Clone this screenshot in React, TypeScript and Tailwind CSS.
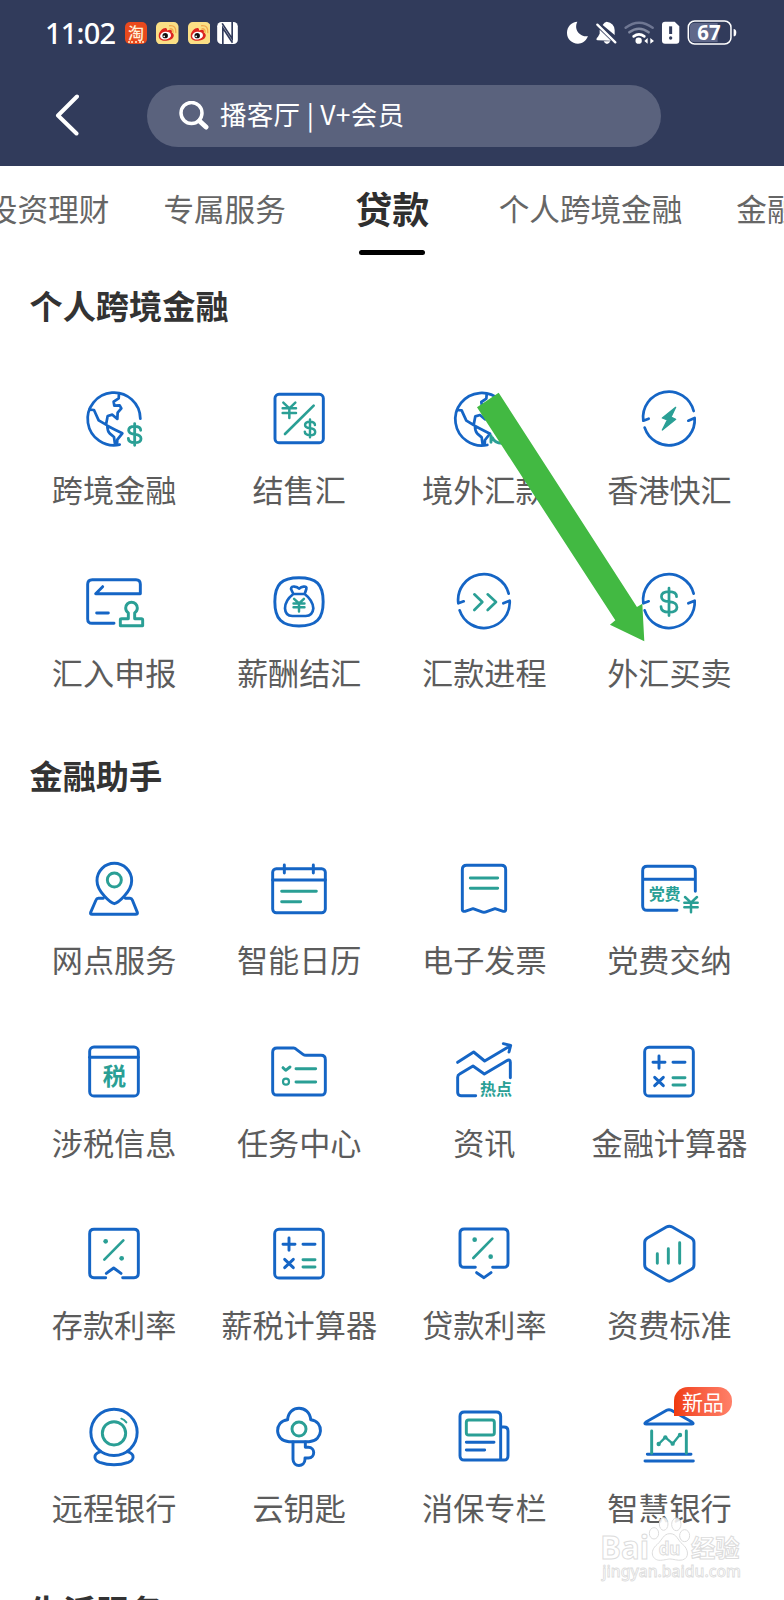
import React from "react";

const B = "#1565c5";
const G = "#2a9f95";

function Icon({ box, children }: { box: string; children: React.ReactNode }) {
  return (
    <svg
      viewBox={box}
      className="h-16 w-16 shrink-0 overflow-visible"
      fill="none"
      stroke={B}
      strokeWidth={8.8}
      strokeLinecap="round"
      strokeLinejoin="round"
    >
      {children}
    </svg>
  );
}

function Dollar({ x, y, s = 1, w = 8.5 }: { x: number; y: number; s?: number; w?: number }) {
  return (
    <path
      transform={`translate(${x} ${y}) scale(${s})`}
      stroke={G}
      strokeWidth={w}
      d="M18 -12 C18 -22 11 -24 0 -24 C-11 -24 -18 -21 -18 -12 C-18 -4 -11 -1 0 0 C11 1 19 4 19 13 C19 22 11 25 0 25 C-11 25 -19 21 -19 12 M0 -32 V33"
    />
  );
}

function Yen({ x, y, s = 1, w = 7.5 }: { x: number; y: number; s?: number; w?: number }) {
  return (
    <path
      transform={`translate(${x} ${y}) scale(${s})`}
      stroke={G}
      strokeWidth={w}
      d="M-18 -20 L0 -3 L18 -20 M0 -3 V26 M-20 -3 H20 M-20 11 H20"
    />
  );
}

function Cycle({ x, y }: { x: number; y: number }) {
  return (
    <path
      transform={`translate(${x} ${y})`}
      strokeWidth={8.2}
      d="M-61 -1 L-77 5 A77 77 0 0 1 74 -24 M58 5 L77 -3 A77 77 0 0 1 -73 26"
    />
  );
}

function Globe({ x, y }: { x: number; y: number }) {
  return (
    <g transform={`translate(${x} ${y})`} strokeWidth={8.2}>
      <path d="M79 -1 A79 79 0 1 0 17 77" />
      <path d="M15 -75 L14 -62 L-1 -52 L1 -40 L17 -41 L22 -32 L11 -19 L10 0 L-5 -13 L-19 -9 L-24 17 L-46 4 L-56 -18 L-60 -27 L-74 -28" />
      <path d="M9 76 L10 62 L25 43 L3 32 L-20 20 Q-20 35 -13 43 L0 54 L3 76" />
    </g>
  );
}

function Calculator({ x, y }: { x: number; y: number }) {
  return (
    <g transform={`translate(${x} ${y})`}>
      <rect x="-73" y="-73" width="146" height="146" rx="13" />
      <path d="M-30 -47 V-10 M-48 -28.500 H-12 M12 -28.500 H48 M-43 17 L-17 42 M-17 17 L-43 42" />
      <path stroke={G} d="M12 18 H48 M12 40 H48" />
    </g>
  );
}

function Percent({ x, y }: { x: number; y: number }) {
  return (
    <g transform={`translate(${x} ${y})`} stroke={G}>
      <path strokeWidth={8} d="M29 -29 L-28 29" />
      <circle cx="-24" cy="-26" r="7" fill={G} stroke="none" />
      <circle cx="24" cy="25" r="7" fill={G} stroke="none" />
    </g>
  );
}

function Glyph({ x, y, size, w, children }: { x: number; y: number; size: number; w: number; children: string }) {
  return (
    <text
      x={x}
      y={y}
      fontSize={size}
      textLength={w}
      fill={G}
      stroke="none"
      className="font-['Noto_Sans_CJK_SC',sans-serif] font-bold"
    >
      {children}
    </text>
  );
}

const crossBorder = [
  {
    label: "跨境金融",
    icon: (
      <Icon box="246 51 192 192">
        <Globe x={342} y={147} />
        <Dollar x={404} y={193} />
      </Icon>
    ),
  },
  {
    label: "结售汇",
    icon: (
      <Icon box="802 51 192 192">
        <rect x="826" y="73" width="145" height="145" rx="12" />
        <Yen x={869} y={118} />
        <path stroke={G} strokeWidth={8} d="M942 107 L856 192" />
        <Dollar x={931} y={175} s={0.82} w={9} />
      </Icon>
    ),
  },
  {
    label: "境外汇款",
    icon: (
      <Icon box="180 51 192 192">
        <Globe x={269} y={148} />
        <path stroke={G} d="M297 197 V217 M301 203 Q308 219 330 220" />
      </Icon>
    ),
  },
  {
    label: "香港快汇",
    icon: (
      <Icon box="736 51 192 192">
        <Cycle x={832} y={147} />
        <path stroke={G} strokeWidth={4} fill={G} d="M852 112 L812 144 L827 150 L812 180 L852 148 L838 141 Z" />
      </Icon>
    ),
  },
  {
    label: "汇入申报",
    icon: (
      <Icon box="246 599 192 192">
        <path d="M342 759 H276 Q263 759 263 746 V642 Q263 628 277 628 H408 Q421 628 421 642 V670 H287 L308 649 M290 728 H325" />
        <path
          stroke={G}
          d="M361 766 V748 Q361 745 365 745 H385 V728 Q377 722 377 713 A17.500 17.500 0 0 1 412 713 Q412 722 404 728 V745 H424 Q428 745 428 749 V766 Z"
        />
      </Icon>
    ),
  },
  {
    label: "薪酬结汇",
    icon: (
      <Icon box="802 599 192 192">
        <path d="M898 622 C950 622 970.500 642 970.500 694 C970.500 746 950 767 898 767 C846 767 825.500 746 825.500 694 C825.500 642 846 622 898 622 Z" />
        <path
          strokeWidth={8}
          d="M881 671 C864 684 856 700 856 714 Q857 736 878 737 H918 Q939 736 941 714 C940 700 932 684 915 671 Z M881 671 L874 656 Q875 647 885 649 Q893 650 898 655 Q904 650 912 649 Q922 648 920 656 L915 671"
        />
        <Yen x={898} y={702} s={0.82} w={9} />
      </Icon>
    ),
  },
  {
    label: "汇款进程",
    icon: (
      <Icon box="180 599 192 192">
        <Cycle x={276} y={694} />
        <path stroke={G} strokeWidth={8} d="M247 672 L271 695 L247 719 M287 672 L312 695 L287 719" />
      </Icon>
    ),
  },
  {
    label: "外汇买卖",
    icon: (
      <Icon box="736 599 192 192">
        <Cycle x={832} y={694} />
        <Dollar x={832} y={694} s={1.26} w={6.5} />
      </Icon>
    ),
  },
];

const assistant = [
  {
    label: "网点服务",
    icon: (
      <Icon box="246 351 192 192">
        <path d="M343 491 C334 489 291 456 291 422 A51.500 51.500 0 0 1 395 422 C395 456 352 489 343 491 Z" />
        <path d="M310 475 H295 Q290 475 288 480 L272 517 Q270 523 276 523 H407 Q414 523 412 517 L397 480 Q395 475 390 475 H376" />
        <circle cx="343" cy="420" r="21" stroke={G} />
      </Icon>
    ),
  },
  {
    label: "智能日历",
    icon: (
      <Icon box="802 351 192 192">
        <rect x="819" y="386" width="158" height="132" rx="11" />
        <path d="M819 420 H977 M854 375 V399 M941 375 V399" />
        <path stroke={G} d="M846 454 H950 M846 485 H903" />
      </Icon>
    ),
  },
  {
    label: "电子发票",
    icon: (
      <Icon box="180 51 192 192">
        <path d="M211 209 V89 Q211 76 224 76 H328 Q341 76 341 89 V209 Q341 215 334 214 L309 206 L284 215 Q276 219 268 215 L243 206 L219 214 Q211 215 211 209 Z" />
        <path stroke={G} d="M235 114 H317 M235 145 H317" />
      </Icon>
    ),
  },
  {
    label: "党费交纳",
    icon: (
      <Icon box="736 51 192 192">
        <path d="M856 211 H767 Q753 211 753 197 V92 Q753 79 767 79 H897 Q911 79 911 92 V154 M753 118 H911" />
        <Glyph x={772} y={181} size={47} w={94}>党费</Glyph>
        <Yen x={898} y={191} />
      </Icon>
    ),
  },
  {
    label: "涉税信息",
    icon: (
      <Icon box="246 899 192 192">
        <rect x="269" y="920" width="146" height="147" rx="13" />
        <path d="M269 951 H415" />
        <Glyph x={308} y={1033} size={70} w={70}>税</Glyph>
      </Icon>
    ),
  },
  {
    label: "任务中心",
    icon: (
      <Icon box="802 899 192 192">
        <path d="M819 936 Q819 923 832 923 H882 Q886 923 890 927 L910 942 Q914 945 919 945 H964 Q977 945 977 958 V1051 Q977 1064 964 1064 H832 Q819 1064 819 1051 Z" />
        <path stroke={G} d="M850 982 L858 990 L871 980 M889 985 H948 M889 1025 H948" />
        <circle cx="859" cy="1024" r="9" stroke={G} strokeWidth={6.5} />
      </Icon>
    ),
  },
  {
    label: "资讯",
    icon: (
      <Icon box="180 599 192 192">
        <path d="M197 666 L245 635 L278 662 L350 619 M334 610 L356 615 L351 635" />
        <path d="M251 766 H207 Q197 766 197 756 V711 Q197 704 203 701 L243 677 L277 701 L344 661 Q355 655 355 666 V712" />
        <Glyph x={264} y={764} size={48} w={96}>热点</Glyph>
      </Icon>
    ),
  },
  {
    label: "金融计算器",
    icon: (
      <Icon box="736 599 192 192">
        <Calculator x={832} y={694} />
      </Icon>
    ),
  },
  {
    label: "存款利率",
    icon: (
      <Icon box="246 67 192 192">
        <path d="M317 234 H282 Q269 234 269 221 V102 Q269 89 282 89 H402 Q415 89 415 102 V221 Q415 234 402 234 H368 M319 221 L341 205 L363 221" />
        <Percent x={341} y={151} />
      </Icon>
    ),
  },
  {
    label: "薪税计算器",
    icon: (
      <Icon box="802 67 192 192">
        <Calculator x={898} y={162} />
      </Icon>
    ),
  },
  {
    label: "贷款利率",
    icon: (
      <Icon box="180 67 192 192">
        <path d="M250 203 H217 Q204 203 204 190 V101 Q204 88 217 88 H335 Q348 88 348 101 V190 Q348 203 335 203 H302 M254 219 L276 234 L297 219" />
        <Percent x={272} y={146} />
      </Icon>
    ),
  },
  {
    label: "资费标准",
    icon: (
      <Icon box="736 67 192 192">
        <path d="M824 82 Q833 77 842 82 L899 115 Q907 120 907 129 V195 Q907 204 899 209 L842 242 Q833 247 824 242 L767 209 Q759 204 759 195 V129 Q759 120 767 115 Z" />
        <path stroke={G} d="M797 162 V191 M830 147 V191 M864 129 V191" />
      </Icon>
    ),
  },
  {
    label: "远程银行",
    icon: (
      <Icon box="246 616 192 192">
        <circle cx="342" cy="698" r="69.500" />
        <circle cx="342" cy="701" r="35" stroke={G} />
        <path stroke={G} strokeWidth={6} d="M364 657 Q373 660 379 668" />
        <path d="M302 756 C276 764 283 782 299 788 Q342 803 385 788 C401 782 408 764 382 756" />
      </Icon>
    ),
  },
  {
    label: "云钥匙",
    icon: (
      <Icon box="802 616 192 192">
        <path d="M864 660 C866 614 930 614 933 660 C974 664 972 725 928 726 H868 C824 725 822 664 864 660 Z" />
        <circle cx="898" cy="688" r="21" stroke={G} />
        <path d="M880 727 V779 C880 804 916 803 916 779 V775 H926 C948 774 947 743 926 743 H917 V727" />
      </Icon>
    ),
  },
  {
    label: "消保专栏",
    icon: (
      <Icon box="180 616 192 192">
        <path d="M326 781 H217 Q204 781 204 768 V650 Q204 637 217 637 H313 Q326 637 326 650 Z M326 781 H336 Q348 781 348 768 V694 Q348 682 336 682 H327" />
        <rect x="223" y="661" width="84" height="45" rx="7" stroke={G} />
        <path d="M223 728 H306 M223 751 H278" />
      </Icon>
    ),
  },
  {
    label: "智慧银行",
    badge: "新品",
    icon: (
      <Icon box="736 616 192 192">
        <path d="M763 673 Q756 673 763 667 L825 632 Q832 628 839 632 L901 667 Q908 673 901 673 Z M767 764 H898 M760 784 H905" />
        <path stroke={G} d="M780 694 V761 M884 694 V761" />
        <path stroke={G} strokeWidth={7} d="M801 733 L821 713 L843 732 L864 706" />
        <g fill={G} stroke="none">
          <circle cx="801" cy="733" r="6.500" />
          <circle cx="821" cy="713" r="6.500" />
          <circle cx="843" cy="732" r="6.500" />
          <circle cx="865" cy="706" r="6.500" />
        </g>
      </Icon>
    ),
  },
];

type Item = { label: string; icon: React.ReactNode; badge?: string };

function Section({ title, items }: { title: string; items: Item[] }) {
  return (
    <section className="pb-[3.25px]">
      <h2 className="mb-[63px] pl-[29.500px] text-[33.200px] leading-[38px] font-bold text-[#333]">{title}</h2>
      <div className="ml-[21.500px] grid w-[740.500px] auto-rows-[182.75px] grid-cols-4">
        {items.map((item) => (
          <div key={item.label} className="relative flex flex-col items-center">
            {item.icon}
            <span className="mt-[18px] text-[31.150px] leading-[39px] whitespace-nowrap text-[#5c5c5c]">{item.label}</span>
            {item.badge && (
              <span className="absolute -top-[18px] left-[97px] flex h-[29px] w-[58px] items-center justify-center rounded-[14px] rounded-bl-none bg-linear-to-r from-[#f03a0c] to-[#ff8069] pb-px text-[21px] leading-none text-white">
                {item.badge}
              </span>
            )}
          </div>
        ))}
      </div>
    </section>
  );
}

function WeiboIcon() {
  return (
    <svg viewBox="0 0 66 66" className="h-[22.500px] w-[22.500px]">
      <rect width="66" height="66" rx="14" fill="#fbdf85" />
      <path d="M8 40 C8 26 25 14 31 19 C34 22 31 25 33 25 C43 20 49 24 46 31 C58 36 53 54 30 55 C16 56 8 50 8 40 Z" fill="#dc2420" />
      <ellipse cx="28" cy="40" rx="16" ry="11.500" fill="#fff" transform="rotate(-8 28 40)" />
      <circle cx="27" cy="40" r="8" fill="#111" />
      <circle cx="24" cy="42" r="2.500" fill="#fff" />
      <path d="M41 20 Q51 19 50 30 M40 11 Q60 9 58 31" fill="none" stroke="#f3a94c" strokeWidth="4" strokeLinecap="round" />
    </svg>
  );
}

function StatusBar() {
  return (
    <div className="flex h-[66px] items-center pl-[45px]">
      <span className="w-[80px] pb-px font-['Noto_Sans',sans-serif] text-[29px] leading-none font-medium tracking-[-0.8px]">11:02</span>
      <div className="flex items-center gap-[9px]">
        <div className="flex h-[22px] w-[22px] flex-col items-center justify-center rounded-[5px] bg-[#e9491d]">
          <span className="text-[16px] leading-[16px] font-medium text-[#fff0d8]">淘</span>
          <span className="mt-px h-[2px] w-[16px] border-t-2 border-dotted border-[#ffc9a0]" />
        </div>
        <WeiboIcon />
        <WeiboIcon />
        <svg viewBox="0 0 62 66" className="-ml-[2px] h-[22px] w-[21px]">
          <rect width="62" height="66" rx="13" fill="#fff" />
          <path d="M17 66 V18 L46 62 M15 4 L45 50 V0" fill="none" stroke="#313b5b" strokeWidth="5" />
        </svg>
      </div>
      <svg viewBox="520 55 520 90" className="ml-auto mr-[45.300px] h-[30px] w-[173.300px]" fill="#fff">
        <path d="M557 66 C545 90 565 112 589 110 C582 126 570 132 559 132 C540 132 526 118 526 100 C526 80 540 67 557 66 Z" />
        <path d="M618 122 Q610 120 619 111 L624 102 V90 L658 123 Z M633 76 Q638 67 645 66 Q668 70 669 91 V106 Z M636 125 H656 Q652 133 646 133 Q640 133 636 125 Z" />
        <path d="M617 75 L671 128" stroke="#fff" strokeWidth="7" strokeLinecap="round" />
        <g fill="none" strokeLinecap="round" strokeWidth="7.500">
          <path d="M702 84 Q742 54 783 84" stroke="#6e7692" />
          <path d="M713 98 Q742 76 771 98" stroke="#8088a0" />
          <path d="M726 110 Q742 98 758 110" stroke="#fff" strokeWidth="8" />
        </g>
        <circle cx="741" cy="123" r="9.500" />
        <path d="M768 115 V132 L758 124 Z M776 115 V132 L787 124 Z" />
        <path d="M820 66 H849 L863 80 V123 Q863 132 854 132 H820 Q811 132 811 123 V75 Q811 66 820 66 Z" />
        <path d="M837 80 V103" stroke="#313b5b" strokeWidth="9" />
        <circle cx="837" cy="115" r="5" fill="#313b5b" />
        <path d="M908 70 H978 V127 H908 Q895 127 895 115 V82 Q895 70 908 70 Z" fill="#60688a" />
        <rect x="890" y="64" width="128" height="69" rx="19" fill="none" stroke="#fff" strokeWidth="4.500" />
        <path d="M1026 88 Q1034 88 1034 99 Q1034 110 1026 110 Z" />
        <text x="917" y="121" fontSize="62" textLength="70" lengthAdjust="spacingAndGlyphs" className="font-['Noto_Sans',sans-serif] font-bold">67</text>
      </svg>
    </div>
  );
}

function Watermark() {
  return (
    <svg viewBox="625 945 430 205" className="absolute top-[1515px] left-[600.300px] h-[68.300px] w-[143.300px]" fill="#fff" stroke="#dcdcdc" strokeWidth="3">
      <g fillOpacity="0.85">
        <ellipse cx="816" cy="972" rx="13" ry="19" />
        <ellipse cx="854" cy="973" rx="14" ry="19" />
        <ellipse cx="787" cy="1000" rx="14" ry="17" />
        <ellipse cx="879" cy="1007" rx="15" ry="18" />
        <path d="M835 1001 C815 1001 812 1020 797 1033 C770 1055 783 1082 806 1081 C822 1080 828 1077 835 1077 C846 1077 858 1083 872 1080 C895 1074 890 1046 873 1033 C857 1020 856 1001 835 1001 Z" />
      </g>
      <text x="626" y="1078" fontSize="98" textLength="146" lengthAdjust="spacingAndGlyphs" className="font-['Noto_Sans',sans-serif] font-bold">Bai</text>
      <text x="801" y="1065" fontSize="54" textLength="65" lengthAdjust="spacingAndGlyphs" className="font-['Noto_Sans',sans-serif] font-bold">du</text>
      <text x="898" y="1070" fontSize="73" textLength="146" className="font-['Noto_Sans_CJK_SC',sans-serif] font-bold">经验</text>
      <text x="632" y="1131" fontSize="48" textLength="416" lengthAdjust="spacingAndGlyphs" strokeWidth="2.500" className="font-['Noto_Sans',sans-serif] font-medium">jingyan.baidu.com</text>
    </svg>
  );
}

export default function App() {
  return (
    <div className="relative h-[1600px] w-[784px] overflow-hidden bg-white font-['Noto_Sans_CJK_SC',sans-serif]">
      <header className="h-[166px] bg-[#313b5b] text-white">
        <StatusBar />
        <div className="flex items-center pt-[19px]">
          <svg viewBox="0 0 24 42" className="mb-[2px] ml-[55px] h-[42px] w-6" fill="none" stroke="#fff" strokeWidth="4" strokeLinecap="round" strokeLinejoin="round">
            <path d="M22 2.500 L3 21.500 L21.500 39.500" />
          </svg>
          <div className="ml-[68px] flex h-[62px] w-[514px] items-center rounded-full bg-[#5a627d] pl-[32px]">
            <svg viewBox="0 0 30 30" className="h-[30px] w-[30px]" fill="none" stroke="#fff" strokeLinecap="round">
              <circle cx="12.500" cy="12" r="10.500" strokeWidth="3.500" />
              <path d="M20.500 20 L27 26" strokeWidth="5" />
            </svg>
            <span className="mb-[4px] ml-[11px] text-[26.500px] leading-none tracking-[0.3px] whitespace-nowrap">播客厅 | V+会员</span>
          </div>
        </div>
      </header>

      <nav className="-ml-[13px] flex h-[120px] w-[840px] items-start gap-[54px] pt-[20px] text-[30.600px] leading-[44px] whitespace-nowrap text-[#666]">
        <span>投资理财</span>
        <span>专属服务</span>
        <span className="mx-[15.500px] flex flex-col items-center text-[37px] font-bold text-[#2f2f2f]">
          贷款
          <span className="mt-[20px] h-[5px] w-[66px] rounded-full bg-black" />
        </span>
        <span>个人跨境金融</span>
        <span>金融助手</span>
      </nav>

      <main>
        <Section title="个人跨境金融" items={crossBorder} />
        <Section title="金融助手" items={assistant} />
        <Section title="生活服务" items={[]} />
      </main>

      <svg viewBox="250 60 520 760" className="absolute top-[390px] left-[475.300px] h-[253.300px] w-[173.300px]" fill="#42b942">
        <path d="M256 112 L321 68 L736 711 L752 701 L758 814 L655 764 L671 751 Z" />
      </svg>
      <Watermark />
    </div>
  );
}
